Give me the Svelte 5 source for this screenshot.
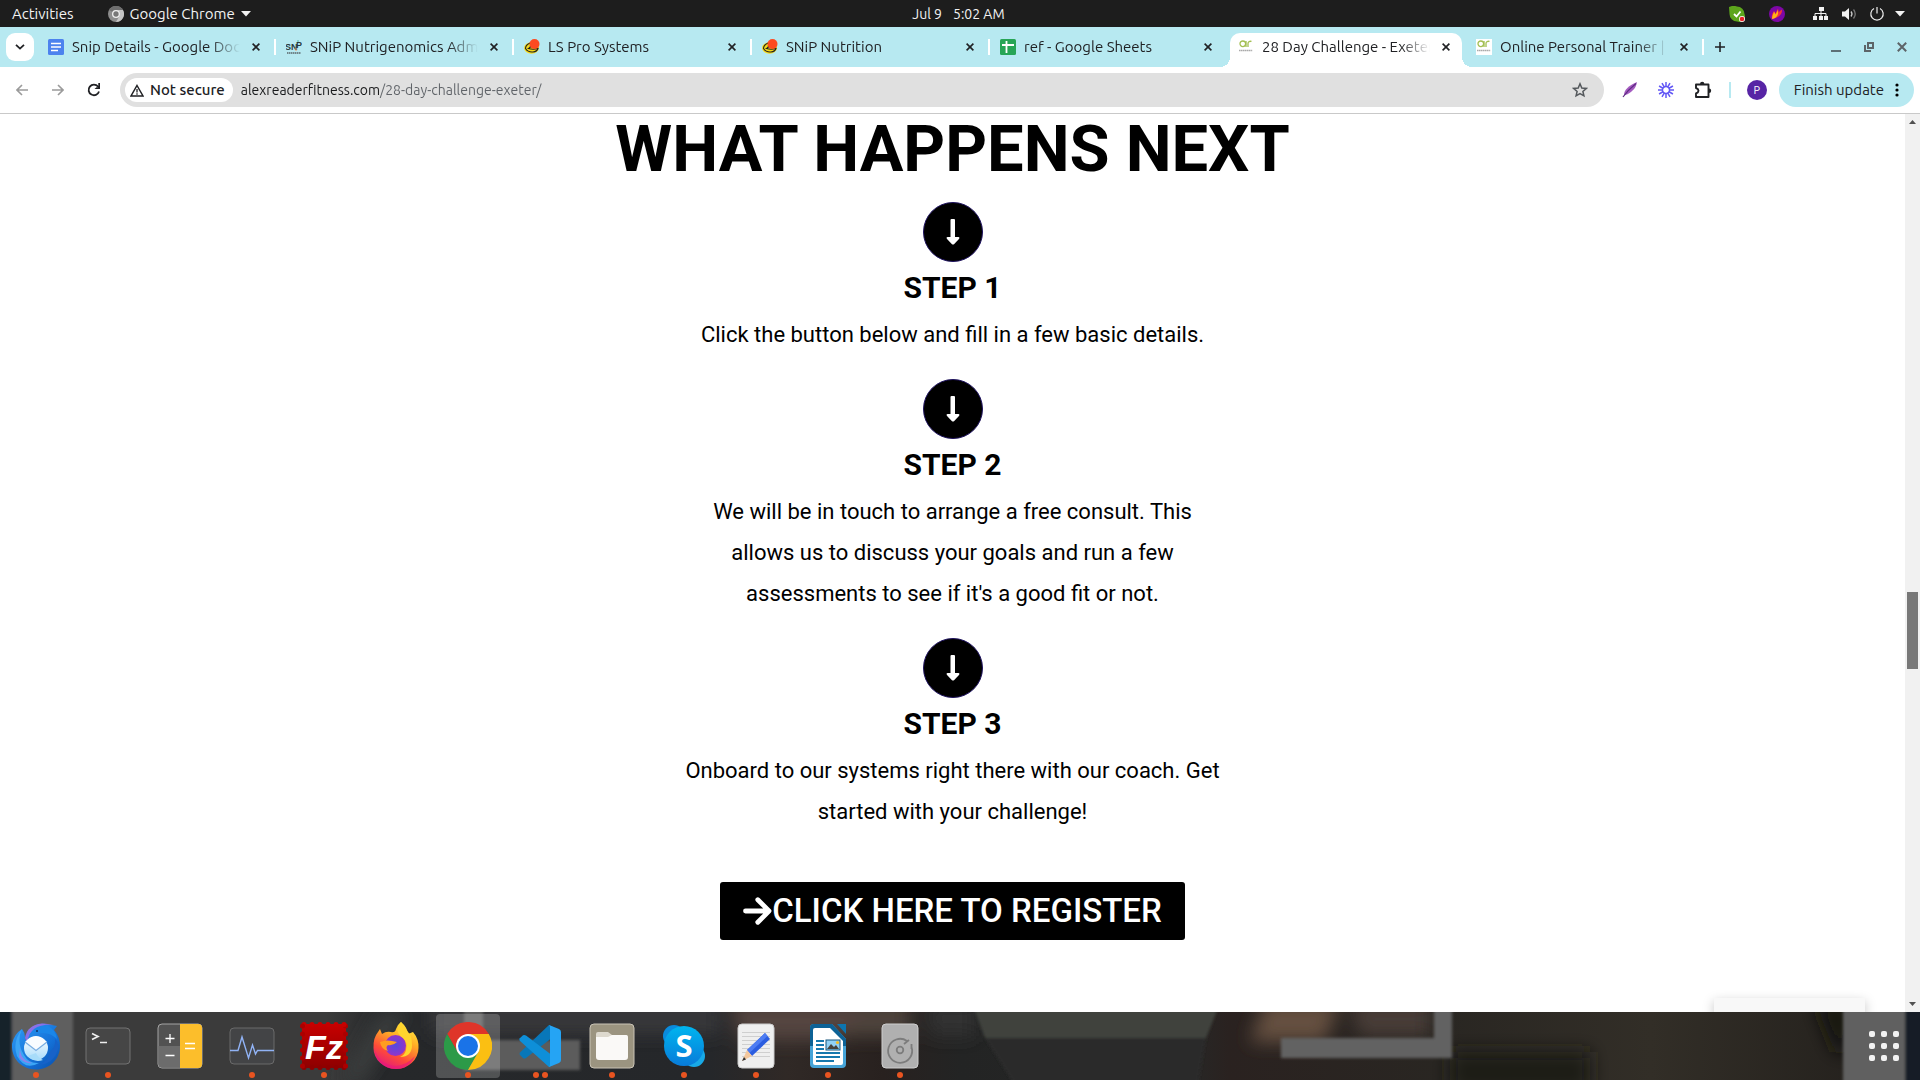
<script>
  const tabs = [
    { title: 'Snip Details - Google Docs', icon: 'docs' },
    { title: 'SNiP Nutrigenomics Admin', icon: 'snip' },
    { title: 'LS Pro Systems', icon: 'ls' },
    { title: 'SNiP Nutrition', icon: 'ls' },
    { title: 'ref - Google Sheets', icon: 'sheets' },
    { title: '28 Day Challenge - Exeter', icon: 'ar', active: true },
    { title: 'Online Personal Trainer | Alex', icon: 'ar' }
  ];

  const steps = [
    { title: 'STEP 1', text: 'Click the button below and fill in a few basic details.' },
    {
      title: 'STEP 2',
      text: "We will be in touch to arrange a free consult. This allows us to discuss your goals and run a few assessments to see if it's a good fit or not."
    },
    {
      title: 'STEP 3',
      text: 'Onboard to our systems right there with our coach. Get started with your challenge!'
    }
  ];

  const apps = [
    { name: 'Thunderbird', dots: 1 },
    { name: 'Terminal', dots: 1 },
    { name: 'Calculator', dots: 0 },
    { name: 'System Monitor', dots: 1 },
    { name: 'FileZilla', dots: 1 },
    { name: 'Firefox', dots: 0 },
    { name: 'Chrome', dots: 1, active: true },
    { name: 'Code', dots: 2 },
    { name: 'Files', dots: 1 },
    { name: 'Skype', dots: 1 },
    { name: 'Text Editor', dots: 1 },
    { name: 'Writer', dots: 1 },
    { name: 'Disks', dots: 1 }
  ];

  const stampHoles = [4, 12, 20, 28, 36, 44];
  const rays = [0, 30, 60, 90, 120, 150, 180, 210, 240, 270, 300, 330];
  const gridDots = [0, 1, 2, 3, 4, 5, 6, 7, 8];

  let url = $state('alexreaderfitness.com/28-day-challenge-exeter/');
</script>

<div class="desktop">
  <header class="topbar">
    <div class="top-left">
      <button class="plain">Activities</button>
      <button class="plain app-menu">
        <svg width="16" height="16" viewBox="0 0 48 48" aria-hidden="true">
          <circle cx="24" cy="24" r="24" fill="#8d8d8d" />
          <path d="M3.2 12A24 24 0 0 1 44.8 12H24A12 12 0 0 0 13.6 18Z" fill="#6e6e6e" />
          <path d="M44.8 12A24 24 0 0 1 24 48L34.4 30A12 12 0 0 0 24 12Z" fill="#c4c4c4" />
          <circle cx="24" cy="24" r="12" fill="#eee" />
          <circle cx="24" cy="24" r="8" fill="#777" />
        </svg>
        <span>Google Chrome</span>
        <svg width="10" height="6" viewBox="0 0 10 6" aria-hidden="true"><path d="M0 0H10L5 5.500Z" fill="#f2f2f2" /></svg>
      </button>
    </div>
    <button class="plain clock"><span>Jul 9</span><span>5:02 AM</span></button>
    <div class="top-right">
      <svg width="16" height="16" viewBox="0 0 16 16" aria-hidden="true">
        <path d="M0 1Q4-1 8 .5A7.5 7.5 0 0 1 15.5 8Q17 12 14 15Q11 16.500 8 15.500A7.500 7.500 0 0 1 .5 8Z" fill="#5da51c" />
        <path d="M5 8l2.500 2.500L11.500 5.500" fill="none" stroke="#fff" stroke-width="1.800" />
        <circle cx="13" cy="13" r="3" fill="#fff" /><circle cx="13" cy="13" r="2.300" fill="#e8232b" />
      </svg>
      <svg class="flame" width="16" height="16" viewBox="0 0 16 16" aria-hidden="true">
        <circle cx="8" cy="8" r="8" fill="#7d07a6" />
        <path d="M3 13C2 9 4 7 5 5L6.500 7.500L9 2.500L9.700 6L13 3.500C13.500 8 10 12 3 13Z" fill="#f4323c" />
        <path d="M3 13C3 10 4.500 8 5 5.500L6.500 8.500L9 4L9 8C8 11 6 12.500 3 13Z" fill="#ffb517" />
      </svg>
      <svg width="16" height="16" viewBox="0 0 16 16" aria-hidden="true">
        <path d="M6 1h5v4H6zM0 10h4v4H0zM6 10h4v4H6zM11 10h4v4h-4z" fill="#f2f2f2" />
        <path d="M8 5v5M2 10V7.500H13V10" fill="none" stroke="#f2f2f2" />
      </svg>
      <svg class="sound" width="16" height="16" viewBox="0 0 16 16" aria-hidden="true">
        <path d="M1 5.500h3L8 2v12l-4-3.500H1z" fill="#f2f2f2" />
        <path d="M10 5.500q2 2.500 0 5" fill="none" stroke="#ccc" stroke-width="1.300" />
        <path d="M12.500 3.500q3.500 4.500 0 9" fill="none" stroke="#777" stroke-width="1.300" />
      </svg>
      <svg class="power" width="16" height="16" viewBox="0 0 16 16" aria-hidden="true">
        <path d="M5 2.500A6.200 6.200 0 1 0 11 2.500M8 1v6.500" fill="none" stroke="#eee" stroke-width="1.200" />
      </svg>
      <svg width="10" height="6" viewBox="0 0 10 6" aria-hidden="true"><path d="M0 0H10L5 5.500Z" fill="#f2f2f2" /></svg>
    </div>
  </header>

  <div class="tabstrip">
    <button class="tab-search" aria-label="Search tabs">
      <svg width="10" height="6" viewBox="0 0 10 6"><path d="M1 .8L5 4.600L9 .8" fill="none" stroke="#202124" stroke-width="1.800" /></svg>
    </button>
    <div class="tabs">
      {#each tabs as tab}
        <div class="tab" class:active={tab.active}>
          <button class="tab-label">
            <svg width="16" height="16" viewBox="0 0 16 16" aria-hidden="true">
              {#if tab.icon === 'docs'}
                <rect width="16" height="16" rx="1.500" fill="#4c82ee" />
                <path d="M3 4.500h10M3 8h10M3 11.500h7" stroke="#fff" stroke-width="1.600" />
              {:else if tab.icon === 'sheets'}
                <rect width="16" height="16" rx="1.500" fill="#27a556" />
                <path d="M2 6h12M6.500 2v12" stroke="#fff" stroke-width="1.800" />
              {:else if tab.icon === 'ls'}
                <ellipse cx="7.500" cy="9" rx="7.500" ry="5.800" fill="#f7d917" />
                <path d="M6 4Q1.500 6 1.500 9.500Q4 13.500 9 13Q13 12.500 14 9.500Q9 11 4.500 9.500Q7 8.500 6.500 6" fill="none" stroke="#222" stroke-width="1.100" />
                <circle cx="10.500" cy="5" r="5" fill="#fd4a21" />
              {:else if tab.icon === 'snip'}
                <text x="-1" y="11" class="snip-mark">SN</text>
                <text x="10" y="9" class="snip-mark">P</text>
                <path d="M12 1v2" stroke="#4db7a5" /><path d="M10 9v3" stroke="#ef9c69" />
                <path d="M1 14h14" stroke="#59656a" stroke-width="1.500" stroke-dasharray="1.500 .5" />
              {:else}
                <rect width="16" height="16" fill="#fff" />
                <circle cx="4.800" cy="4.800" r="2.800" fill="none" stroke="#a3bf52" stroke-width="1.300" />
                <path d="M8 2v6M10 8V4.500Q10 2 13.500 2.300" fill="none" stroke="#a3bf52" stroke-width="1.300" />
                <path d="M1 11.500h13.500" stroke="#aaa" stroke-width="1.700" stroke-dasharray="1.500 .4" />
              {/if}
            </svg>
            <span class="tab-title">{tab.title}</span>
          </button>
          <button class="close" aria-label="Close tab">
            <svg width="8" height="8" viewBox="0 0 8 8"><path d="M.6.6L7.400 7.400M7.400.6L.6 7.400" stroke="#202124" stroke-width="1.600" /></svg>
          </button>
        </div>
      {/each}
    </div>
    <button class="new-tab" aria-label="New tab">
      <svg width="10" height="10" viewBox="0 0 10 10"><path d="M5 0V10M0 5H10" stroke="#202124" stroke-width="1.600" /></svg>
    </button>
    <div class="window-controls">
      <button aria-label="Minimize"><svg width="10" height="10" viewBox="0 0 10 10"><path d="M0 9H10" stroke="#5d7076" stroke-width="2" /></svg></button>
      <button aria-label="Restore"><svg width="10" height="10" viewBox="0 0 10 10"><path d="M4 1H9V6H4ZM1 3V9H7" fill="none" stroke="#5d6468" stroke-width="2" /></svg></button>
      <button aria-label="Close"><svg width="10" height="10" viewBox="0 0 10 10"><path d="M.8.8L9.200 9.200M9.200.8L.8 9.200" stroke="#5d6468" stroke-width="2" /></svg></button>
    </div>
  </div>

  <div class="toolbar">
    <div class="nav-buttons">
      <button aria-label="Back"><svg width="12" height="12" viewBox="0 0 12 12"><path d="M12 6H1M6 1L1 6L6 11" fill="none" stroke="#9b9b9b" stroke-width="1.600" /></svg></button>
      <button aria-label="Forward"><svg width="12" height="12" viewBox="0 0 12 12"><path d="M0 6H11M6 1L11 6L6 11" fill="none" stroke="#9b9b9b" stroke-width="1.600" /></svg></button>
      <button aria-label="Reload">
        <svg width="14" height="14" viewBox="0 0 14 14"><path d="M12 8.500A5.300 5.300 0 1 1 11 3.500L12 4.700" fill="none" stroke="#202124" stroke-width="1.800" /><path d="M13 0V6H7.500L9.500 4.200H11.300V0Z" fill="#202124" /></svg>
      </button>
    </div>
    <div class="omnibox">
      <button class="chip">
        <svg width="14" height="13" viewBox="0 0 14 13" aria-hidden="true"><path d="M7 1.500L13 12H1Z" fill="none" stroke="#202124" stroke-width="1.500" /><path d="M7 5v3.500M7 9.300v1.400" stroke="#202124" stroke-width="1.300" /></svg>
        <span>Not secure</span>
      </button>
      <input class="url" type="text" aria-label="Address" spellcheck="false" bind:value={url} />
      <button class="star" aria-label="Bookmark this page">
        <svg width="16" height="16" viewBox="0 0 16 16"><path d="M8 1.800L9.800 6L14.300 6.400L10.900 9.400L11.900 13.800L8 11.500L4.100 13.800L5.100 9.400L1.700 6.400L6.200 6Z" fill="none" stroke="#54585c" stroke-width="1.500" /></svg>
      </button>
    </div>
    <div class="extensions">
      <button aria-label="Feather extension">
        <svg width="16" height="16" viewBox="0 0 16 16"><path d="M2 13C2 8 6 4 15 0C14 6 11 9 5 12.500Z" fill="#a45bc0" /><path d="M1 15Q6 8 14 1.500" fill="none" stroke="#5f2c83" stroke-width="1.200" /></svg>
      </button>
      <button aria-label="Loom extension">
        <svg width="16" height="16" viewBox="0 0 16 16">
          {#each rays as ray}
            <path d="M8 0V5" stroke="#6257f5" stroke-width="1.500" transform="rotate({ray} 8 8)" />
          {/each}
          <circle cx="8" cy="8" r="3.500" fill="none" stroke="#6257f5" stroke-width="1.400" />
        </svg>
      </button>
      <button aria-label="Extensions">
        <svg width="18" height="18" viewBox="0 0 18 18"><path d="M2 3.500H14.500V16H2V12.500Q4.500 11.500 4.500 9.800Q4.500 8 2 7Z" fill="none" stroke="#202124" stroke-width="1.900" stroke-linejoin="round" /><path d="M6 3a2.200 2.200 0 0 1 4.400 0zM15 7.500a2.200 2.200 0 0 1 0 4.400z" fill="#202124" /></svg>
      </button>
      <span class="divider"></span>
      <button class="avatar">P</button>
    </div>
    <button class="update">
      <span>Finish update</span>
      <svg width="4" height="14" viewBox="0 0 4 14" aria-hidden="true"><circle cx="2" cy="2" r="1.600" /><circle cx="2" cy="7" r="1.600" /><circle cx="2" cy="12" r="1.600" /></svg>
    </button>
  </div>

  <div class="viewport">
    <main>
      <h2>WHAT HAPPENS NEXT</h2>
      {#each steps as step}
        <section class="step">
          <span class="badge">
            <svg width="14" height="26" viewBox="0 0 14 26" aria-hidden="true"><path d="M4.500 1Q4.500 0 5.500 0H8Q9 0 9 1V18H12.500Q14 18.300 13.200 19.700L8 25.200Q7 26 6 25.200L.8 19.700Q0 18.300 1.500 18H4.500Z" fill="#fff" /></svg>
          </span>
          <h3>{step.title}</h3>
          <p>{step.text}</p>
        </section>
      {/each}
      <a class="register" href="#register">
        <svg width="29" height="28" viewBox="0 0 29 28" aria-hidden="true"><path d="M2.500 14H25M14.800 2.700L26 14L14.800 25.300" fill="none" stroke="#fff" stroke-width="4.800" stroke-linecap="round" stroke-linejoin="round" /></svg>
        <span>CLICK HERE TO REGISTER</span>
      </a>
    </main>
    <div class="popup"></div>
    <div class="scrollbar">
      <svg width="7" height="4" viewBox="0 0 7 4" aria-hidden="true"><path d="M0 4L3.500 0L7 4Z" fill="#505050" /></svg>
      <div class="track"><div class="thumb"></div></div>
      <svg width="7" height="4" viewBox="0 0 7 4" aria-hidden="true"><path d="M0 0L3.500 4L7 0Z" fill="#505050" /></svg>
    </div>
  </div>

  <footer class="dock">
    <svg class="wallpaper" viewBox="0 0 1920 68" preserveAspectRatio="none" aria-hidden="true">
      <defs>
        <filter id="soft" x="-5%" y="-20%" width="110%" height="140%"><feGaussianBlur stdDeviation="1.500" /></filter>
        <filter id="haze" x="-20%" y="-40%" width="140%" height="180%"><feGaussianBlur stdDeviation="9" /></filter>
        <linearGradient id="base" x1="0" x2="1" y1="0" y2="0">
          <stop offset="0" stop-color="#3b3b3b" /><stop offset=".17" stop-color="#3b3b3b" />
          <stop offset=".2" stop-color="#26282a" /><stop offset=".37" stop-color="#25272a" />
          <stop offset=".41" stop-color="#302926" /><stop offset=".46" stop-color="#28211f" />
          <stop offset=".5" stop-color="#232424" /><stop offset=".62" stop-color="#272726" />
          <stop offset=".64" stop-color="#2a2220" /><stop offset=".75" stop-color="#292622" />
          <stop offset=".86" stop-color="#322e27" /><stop offset="1" stop-color="#211e1b" />
        </linearGradient>
      </defs>
      <rect width="1920" height="68" fill="url(#base)" />
      <g filter="url(#haze)">
        <path d="M340 70L380 0H410L360 70Z" fill="#3b3c3d" />
        <path d="M430-10H720V22H430Z" fill="#37393b" />
        <path d="M730-10H870L840 28H740Z" fill="#54453f" />
        <path d="M870-10H910V24H840Z" fill="#50443d" />
        <path d="M925-10H975V24H930Z" fill="#303030" />
        <path d="M1265-10H1340L1325 30H1250Z" fill="#65503f" />
        <path d="M1350-10H1430V24H1360Z" fill="#4a3d38" />
        <path d="M1450 40H1590V80H1450Z" fill="#1c1b19" />
        <path d="M1815-10H1850V40H1835Z" fill="#141311" />
      </g>
      <g filter="url(#soft)">
        <path d="M974-4H1218L1206 26H985Z" fill="#41423d" />
        <path d="M985 26H1206L1198 72H1014Z" fill="#2b2c2b" />
        <path d="M464-4H483V28H580V58H464Z" fill="#5c5c5c" />
        <path d="M1434-4H1452V46H1281V26H1434Z" fill="#626262" />
        <path d="M-10-10H12V78H-10Z" fill="#17212b" />
        <path d="M12-10H73V78H12Z" fill="#5f5f5f" />
        <path d="M1843-10H1905V78H1843Z" fill="#606060" />
        <path d="M1905-10H1930V78H1905Z" fill="#141a27" />
      </g>
    </svg>

    {#each apps as app}
      <button class="app" class:active={app.active} aria-label={app.name}>
        <svg class="app-icon" width="48" height="48" viewBox="0 0 48 48">
          {#if app.name === 'Thunderbird'}
            <defs><linearGradient id="tb" x1="0" y1="0" x2="1" y2="1"><stop offset="0" stop-color="#2f9df5" /><stop offset=".6" stop-color="#1471d8" /><stop offset="1" stop-color="#0a4da8" /></linearGradient>
            <linearGradient id="mail" x1="0" y1="0" x2="0" y2="1"><stop offset="0" stop-color="#fff" /><stop offset="1" stop-color="#a9dcfb" /></linearGradient></defs>
            <path d="M16 12C18 4 26 1 34 2Q40 3 45 4L42 8Q48 15 48 24C48 38 37 47.500 24 47.500C9 47.500-1 36 0 22Q2 12 10 7Q14 12 13 18Z" fill="url(#tb)" />
            <path d="M13 16Q15 3 30 1.500L42 2.500Q28 2 22 7Q17 11 15 20Z" fill="#8a70e8" />
            <path d="M17 13Q24 3 36 4Q44 8 45 17Q38 10 29 11Q21 10 17 13Z" fill="#1a86e8" />
            <path d="M46 27Q42 42 26 43Q36 40 38 30Q44 25 43 17Q47 20 46 27Z" fill="#1762c8" />
            <path d="M10 7Q4 20 12 33Q17 42 27 41Q13 49 5 34Q0 20 10 7Z" fill="#3ba5f5" />
            <path d="M8 26Q8 38 20 41Q12 42 7 35Z" fill="#8b83ed" />
            <circle cx="24" cy="26" r="12" fill="url(#mail)" />
            <path d="M13 20Q24 11 35 20L24 29Z" fill="#f8fcff" /><path d="M13 20L24 28.500L35 20" fill="none" stroke="#78aee2" stroke-width="1.300" />
            <path d="M16 34Q22 41 31 38Q26 36 24 31Z" fill="#a7dcfa" />
            <circle cx="25" cy="9" r="1" fill="#112d64" />
          {:else if app.name === 'Terminal'}
            <rect x="2" y="6" width="44" height="36" rx="4" fill="#464646" stroke="#737373" />
            <path d="M8 11.500L14 14.500L8 17.500M16 20.500H23" fill="none" stroke="#eee" stroke-width="1.700" />
          {:else if app.name === 'Calculator'}
            <rect x="2" y="2" width="44" height="44" rx="4" fill="#525252" stroke="#a4a4a4" />
            <path d="M2.500 24H24V45.500H6Q2.500 45.500 2.500 42Z" fill="#6c6c6c" />
            <path d="M24 2H42Q46 2 46 6V42Q46 46 42 46H24Z" fill="#fcbe2b" />
            <path d="M9.500 16.500H18.500M14 12V21M9.500 33.500H18.500M29 21.500H39M29 26.500H39" stroke="#fff" stroke-width="1.300" />
          {:else if app.name === 'System Monitor'}
            <rect x="2" y="6" width="44" height="36" rx="4" fill="#434446" stroke="#6a6a6a" />
            <path d="M2 28.500H10L14 15L20.500 36L24.500 23L27.500 32L29.500 28.500H46" fill="none" stroke="#91b3f5" stroke-width="1.400" />
          {:else if app.name === 'FileZilla'}
            <defs><linearGradient id="fz" x1="0" x2="0" y1="0" y2="1"><stop offset="0" stop-color="#c60000" /><stop offset="1" stop-color="#8e0000" /></linearGradient></defs>
            <rect x="2" y="2" width="44" height="44" fill="url(#fz)" />
            {#each stampHoles as hole}
              <circle cx={hole} cy="2.500" r="2.500" fill="#c60000" /><circle cx={hole} cy="45.500" r="2.500" fill="#8e0000" />
              <circle cx="2.500" cy={hole} r="2.500" fill="#ab0000" /><circle cx="45.500" cy={hole} r="2.500" fill="#ab0000" />
            {/each}
            <text x="24" y="37" class="fz-mark">Fz</text>
          {:else if app.name === 'Firefox'}
            <defs><linearGradient id="ff" x1=".8" y1="0" x2=".3" y2="1"><stop offset="0" stop-color="#fff044" /><stop offset=".35" stop-color="#ffae25" /><stop offset=".7" stop-color="#ff4b38" /><stop offset="1" stop-color="#e3197c" /></linearGradient>
            <radialGradient id="globe"><stop offset="0" stop-color="#534be0" /><stop offset="1" stop-color="#9334c8" /></radialGradient></defs>
            <path d="M29 0Q35 5 36 12L41 10Q47 17 46.500 26A22.500 21 0 0 1 1.500 26Q1 16 6 10L8 7L10 12Q14 9 19 10Q23 11 24 7Q26 2 29 0Z" fill="url(#ff)" />
            <circle cx="23.500" cy="23.500" r="10.500" fill="url(#globe)" />
            <path d="M8 20Q15 17 25 20Q21 24 16 23Q13 25 16 29Q9 27 8 20Z" fill="#ff9d20" />
            <path d="M29 0Q21 9 31 16Q36 20 34 28Q33 33 28 35Q40 35 40 23Q40 13 36 10Z" fill="#ffd52e" />
            <path d="M2 26Q7 43 24 44Q35 43 43 34Q37 47 23.500 47Q5 46 2 26Z" fill="#e8197b" opacity=".65" />
          {:else if app.name === 'Chrome'}
            <path d="M3.200 12A24 24 0 0 1 44.800 12L24 13L13.600 18L14 31Z" fill="#df3529" />
            <path d="M3.200 12A24 24 0 0 0 24 48L34.400 30L24 35L13.600 30Z" fill="#2c9a48" />
            <path d="M44.800 12A24 24 0 0 1 24 48L34.400 30L35 20L24 12Z" fill="#fbbf12" />
            <circle cx="24" cy="24" r="12" fill="#fff" /><circle cx="24" cy="24" r="10" fill="#1a73e8" />
          {:else if app.name === 'Code'}
            <path d="M33 3L4 30.500Q3 32 4 33L7 36Q8.500 37 10 36L37 15V5Z" fill="#0877b9" />
            <path d="M3.500 16.500L7 13.200Q8.500 12.500 10 13.500L37 34V43L33 45L4 19Q3 18 3.500 16.500Z" fill="#0e8fd8" />
            <path d="M33 3L43 7Q45 8 45 10V38Q45 40 43 41L33 45Q34 44 34 42V6Q34 4 33 3Z" fill="#25a4f4" />
          {:else if app.name === 'Files'}
            <rect x="2" y="2" width="44" height="44" rx="4" fill="#9b9480" stroke="#c9c3b5" />
            <path d="M8 12Q8 10 10 10H20L24 13H38Q40 13 40 16V22H8Z" fill="#ddd9ce" />
            <path d="M8 15H20L24 13H38Q40 13 40 16V35Q40 38 37 38H11Q8 38 8 35Z" fill="#faf9f7" />
          {:else if app.name === 'Skype'}
            <defs><linearGradient id="sk" x1="0" x2="0" y1="0" y2="1"><stop offset="0" stop-color="#00b5ef" /><stop offset="1" stop-color="#087bd9" /></linearGradient></defs>
            <circle cx="14" cy="14" r="11" fill="#0a8bdd" /><circle cx="34" cy="34" r="11" fill="#18a9e6" />
            <circle cx="24" cy="24" r="20" fill="url(#sk)" />
            <text x="24" y="35" class="sk-mark">S</text>
          {:else if app.name === 'Text Editor'}
            <rect x="6" y="2" width="36" height="44" rx="4" fill="#efefef" stroke="#ccc" />
            <path d="M10 10.500H38M10 14.500H38M10 18.500H38M10 22.500H38M10 26.500H38M10 30.500H38M10 34.500H38" stroke="#cfcfcf" />
            <path d="M15 28L33 11L38 17L20 34Z" fill="#2b5de0" /><path d="M33 11L35.500 14L17.500 31L15 28Z" fill="#4d7cf2" />
            <path d="M15 28L20 34L10 39Z" fill="#f3c79d" /><path d="M12 35L10 39L14 37.500Z" fill="#333" />
          {:else if app.name === 'Writer'}
            <path d="M10 2H28L42 17V42Q42 46 38 46H10Q6 46 6 42V6Q6 2 10 2Z" fill="#46a4d8" />
            <path d="M6 24V6Q6 2 10 2H28L42 17V24Z" fill="#0d6296" />
            <path d="M33 2H42V12Z" fill="#0d75af" />
            <path d="M11 6H26L39 19V41Q39 43 37 43H11Q9 43 9 41V8Q9 6 11 6Z" fill="#fff" />
            <path d="M12 19H20M12 23H20M12 27H20M12 31H36M12 35H36M12 39H30" stroke="#1678ae" stroke-width="1.800" />
            <rect x="22" y="18" width="14" height="10" fill="#91d1f5" stroke="#18577c" /><path d="M23 27L27 22L30 25L32 23L35 27Z" fill="#46423c" /><circle cx="33.500" cy="20.500" r="1.600" fill="#f6bd22" />
          {:else}
            <rect x="6" y="2" width="36" height="44" rx="4" fill="#b0b0b0" stroke="#cecece" />
            <path d="M31 19A12 12 0 1 0 35.500 25M35.500 27V22M33 18L28 22" fill="none" stroke="#7c7c7c" stroke-width="1.800" />
            <circle cx="24" cy="28" r="3.300" fill="none" stroke="#7c7c7c" stroke-width="1.800" />
          {/if}
        </svg>
        <span class="dots">
          {#each Array(app.dots) as _}<i></i>{/each}
        </span>
      </button>
    {/each}
    <button class="show-apps" aria-label="Show Applications">
      {#each gridDots as dot}<i></i>{/each}
    </button>
  </footer>
</div>

<style>
  :global(body) {
    margin: 0;
    overflow: hidden;
  }
  button,
  input {
    margin: 0;
    padding: 0;
    border: 0;
    background: none;
    color: inherit;
    font: inherit;
  }
  svg {
    display: block;
    flex: none;
  }
  .desktop {
    display: flex;
    flex-direction: column;
    height: 100vh;
    background: #fff;
    color: #202124;
    font-family: Ubuntu, 'Noto Sans', sans-serif;
    font-size: 15px;
    line-height: 20px;
    white-space: nowrap;
  }

  .topbar {
    display: grid;
    grid-template-columns: 1fr auto 1fr;
    align-items: center;
    height: 27px;
    flex: none;
    padding: 0 15px 0 12px;
    background: #1d1d1d;
    color: #f2f2f2;
  }
  .top-left,
  .app-menu,
  .top-right,
  .clock {
    display: flex;
    align-items: center;
  }
  .top-left {
    gap: 34px;
  }
  .app-menu {
    gap: 6px;
  }
  .clock {
    gap: 11px;
    font-size: 14px;
  }
  .top-right {
    justify-content: flex-end;
  }
  .top-right .flame {
    margin: 0 28px 0 24px;
  }
  .top-right .sound {
    margin: 0 12px;
  }
  .top-right .power {
    margin-right: 10px;
  }

  .tabstrip {
    display: flex;
    align-items: center;
    height: 40px;
    flex: none;
    background: #b7e9f1;
  }
  .tab-search {
    display: grid;
    place-items: center;
    flex: none;
    width: 28px;
    height: 28px;
    margin: 0 3px 0 6px;
    border-radius: 9px;
    background: #fff;
  }
  .tabs {
    display: flex;
    flex: 0 1 1666px;
    min-width: 0;
    height: 100%;
  }
  .tab {
    position: relative;
    display: flex;
    align-items: center;
    flex: 1 1 0;
    min-width: 0;
    padding: 0 11px;
  }
  .tab::after {
    content: '';
    position: absolute;
    right: -1px;
    width: 2px;
    height: 16px;
    background: #fff;
  }
  .tab.active::after,
  .tab:has(+ .active)::after {
    display: none;
  }
  .tab.active::before {
    content: '';
    position: absolute;
    z-index: 0;
    inset: 6px 3px 0;
    border-radius: 10px 10px 0 0;
    background: #fff;
  }
  .tab.active .tab-label::before,
  .tab.active .close::after {
    content: '';
    position: absolute;
    bottom: 0;
    width: 10px;
    height: 10px;
  }
  .tab.active .tab-label::before {
    left: -7px;
    background: radial-gradient(circle at 0 0, transparent 10px, #fff 10px);
  }
  .tab.active .close::after {
    right: -7px;
    background: radial-gradient(circle at 100% 0, transparent 10px, #fff 10px);
  }
  .tab-label {
    display: flex;
    align-items: center;
    gap: 8px;
    flex: 1;
    min-width: 0;
  }
  .tab-label svg,
  .tab-title,
  .close svg {
    z-index: 1;
  }
  .tab-title {
    flex: 1;
    min-width: 0;
    overflow: hidden;
    text-align: left;
    mask-image: linear-gradient(to right, #000 calc(100% - 30px), transparent);
  }
  .close {
    display: grid;
    place-items: center;
    width: 16px;
    height: 16px;
    margin-left: 8px;
  }
  .new-tab {
    display: grid;
    place-items: center;
    width: 28px;
    height: 28px;
    margin-left: 3px;
  }
  .window-controls {
    display: flex;
    gap: 23px;
    margin-left: auto;
    padding-right: 13px;
  }

  .toolbar {
    display: flex;
    align-items: center;
    height: 46px;
    flex: none;
    padding: 0 6px 0 4px;
    border-bottom: 1px solid #c9c9c9;
    background: #fff;
  }
  .nav-buttons {
    display: flex;
    margin-right: 8px;
  }
  .nav-buttons button {
    display: grid;
    place-items: center;
    width: 36px;
    height: 34px;
  }
  .omnibox {
    display: flex;
    align-items: center;
    flex: 1;
    min-width: 0;
    height: 34px;
    padding: 0 16px 0 5px;
    box-sizing: border-box;
    border-radius: 17px;
    background: #e0e0e0;
  }
  .chip {
    display: flex;
    align-items: center;
    gap: 6px;
    height: 24px;
    padding: 0 8px 0 5px;
    border-radius: 12px;
    background: #fff;
    font-weight: 500;
  }
  .url {
    flex: 1;
    min-width: 0;
    margin-left: 8px;
    background: linear-gradient(to right, #18191b 138px, #5f6368 138px);
    background-clip: text;
    color: transparent;
    font-size: 14px;
    outline: none;
  }
  .extensions {
    display: flex;
    align-items: center;
    gap: 20px;
    margin: 0 12px 0 18px;
  }
  .divider {
    width: 2px;
    height: 16px;
    margin-right: -4px;
    margin-left: -3px;
    background: #b7e9f1;
  }
  .avatar {
    width: 20px;
    height: 20px;
    border-radius: 50%;
    background: #5724a5;
    color: #fff;
    font-size: 11px;
  }
  .update {
    display: flex;
    align-items: center;
    gap: 11px;
    height: 34px;
    padding: 0 15px;
    border-radius: 17px;
    background: #b7e9f1;
  }

  .viewport {
    position: relative;
    display: flex;
    flex: 1;
    min-height: 0;
    overflow: hidden;
  }
  main {
    flex: 1;
    color: #000;
    font-family: Roboto, sans-serif;
    text-align: center;
    white-space: normal;
  }
  h2 {
    margin: 0 0 17px;
    font-size: 65px;
    font-weight: 700;
    line-height: 71px;
  }
  .step {
    display: flex;
    flex-direction: column;
    align-items: center;
    margin-bottom: 24px;
  }
  .badge {
    display: grid;
    place-items: center;
    box-sizing: border-box;
    width: 60px;
    height: 60px;
    border: 1px solid #1f1360;
    border-radius: 50%;
    background: #000;
  }
  h3 {
    margin: 11px 0;
    font-size: 30px;
    font-weight: 700;
    line-height: 30px;
  }
  p {
    max-width: 540px;
    margin: 0;
    font-size: 22px;
    line-height: 41px;
  }
  .register {
    display: inline-flex;
    align-items: center;
    height: 58px;
    margin-top: 26px;
    padding: 0 23px;
    border-radius: 3px;
    background: #000;
    color: #fff;
    font-size: 33px;
    font-weight: 500;
    line-height: 58px;
    text-decoration: none;
  }
  .popup {
    position: absolute;
    right: 55px;
    bottom: 0;
    width: 151px;
    height: 14px;
    background: #f8f8f8;
    box-shadow: 0 4px 12px rgba(0, 0, 0, 0.25);
  }
  .scrollbar {
    position: relative;
    display: flex;
    flex-direction: column;
    align-items: center;
    width: 15px;
    padding: 6px 0;
    box-sizing: border-box;
    background: #f1f1f1;
  }
  .track {
    display: flex;
    flex: 1;
    flex-direction: column;
    width: 11px;
  }
  .track::before {
    content: '';
    flex: 468;
  }
  .track::after {
    content: '';
    flex: 333;
  }
  .thumb {
    flex: 77;
    background: #787878;
  }

  .dock {
    position: relative;
    display: flex;
    flex: none;
    height: 68px;
    overflow: hidden;
  }
  .wallpaper {
    position: absolute;
    inset: 0;
    width: 100%;
    height: 100%;
  }
  .app {
    position: relative;
    display: grid;
    place-items: center;
    width: 72px;
    height: 68px;
  }
  .app-icon {
    z-index: 1;
  }
  .app.active::before {
    content: '';
    position: absolute;
    inset: 2px 4px;
    border-radius: 4px;
    background: rgba(255, 255, 255, 0.2);
  }
  .dots {
    position: absolute;
    bottom: 2px;
    display: flex;
    gap: 3px;
  }
  .dots i {
    width: 6px;
    height: 6px;
    border-radius: 50%;
    background: #e95420;
  }
  .show-apps {
    position: relative;
    display: grid;
    grid-template-columns: repeat(3, 6px);
    gap: 6px;
    align-content: center;
    margin-left: auto;
    padding-right: 21px;
  }
  .show-apps i {
    height: 6px;
    border-radius: 2px;
    background: #f2f2f2;
  }
  .snip-mark {
    font: 700 9px 'Liberation Sans', sans-serif;
    fill: #27393d;
  }
  .fz-mark {
    font: italic 700 34px 'Liberation Sans', sans-serif;
    fill: #fff;
    text-anchor: middle;
  }
  .sk-mark {
    font: 700 31px 'Open Sans', sans-serif;
    fill: #fff;
    text-anchor: middle;
  }
</style>
